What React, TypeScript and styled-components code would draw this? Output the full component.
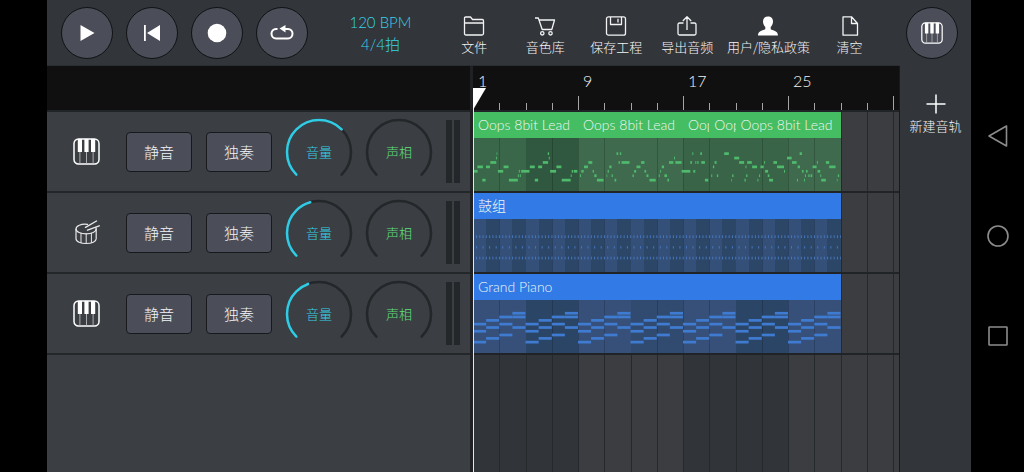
import React, { useState } from "react";
import styled, { createGlobalStyle } from "styled-components";

const LATIN = `Lato, "Noto Sans CJK SC", sans-serif`;
const CJK = `"Noto Sans CJK SC", sans-serif`;

const GlobalStyle = createGlobalStyle`
  *, *::before, *::after { box-sizing: border-box; }
  body { margin: 0; background: #000; font-family: ${CJK}; font-weight: 300; color: #f2f3f5; }
  button { font: inherit; color: inherit; cursor: pointer; padding: 0; margin: 0; border: 0; background: none; }
  svg { display: block; }
`;

/* ---------- page frame ---------- */

const Screen = styled.div`
  display: flex;
  min-height: 100vh;
  padding-left: 47px;
  background: #000;
`;

const Main = styled.main`
  flex: 1;
  min-width: 0;
  display: flex;
  flex-direction: column;
`;

const Sidebar = styled.aside`
  flex: 0 0 71px;
  display: flex;
  flex-direction: column;
  background: #323539;
`;

const SidebarTop = styled.div`
  height: 66px;
  padding: 7px 6px;
`;

const NewTrackButton = styled.button`
  display: flex;
  flex-direction: column;
  align-items: center;
  gap: 2px;
  margin-top: 28px;
  font-size: 13px;
  line-height: 20px;
  white-space: nowrap;
`;

const SystemNav = styled.nav`
  flex: 0 0 53px;
  display: flex;
  flex-direction: column;
  align-items: center;
  justify-content: center;
  gap: 76px;
`;

/* ---------- toolbar ---------- */

const Toolbar = styled.header`
  display: flex;
  align-items: center;
  height: 66px;
  padding: 0 15px 0 14px;
  background: #323539;
  border-bottom: 1px solid #2a2d31;
`;

const Transport = styled.div`
  display: flex;
  gap: 13px;
`;

const RoundButton = styled.button`
  display: grid;
  place-items: center;
  width: 52px;
  height: 52px;
  border-radius: 50%;
  border: 1px solid #111215;
  background: #4b4d58;
`;

const Tempo = styled.button`
  flex: 1;
  margin-left: 14px;
  font-family: ${LATIN};
  font-size: 15px;
  line-height: 22px;
  font-weight: 300;
  color: #38d2ea;
  span { display: block; }
`;

const Menu = styled.div`
  display: flex;
`;

const MenuButton = styled.button`
  display: flex;
  flex-direction: column;
  align-items: center;
  min-width: 71px;
  padding: 6px 4px 0;
  font-size: 13px;
  line-height: 20px;
  white-space: nowrap;
`;

/* ---------- track panel ---------- */

const Workspace = styled.div`
  flex: 1;
  display: flex;
`;

const TrackPanel = styled.section`
  display: flex;
  flex-direction: column;
  background: #3b3e42;
  border-right: 3px solid #1f2124;
  box-sizing: content-box;
`;

const PanelHead = styled.div`
  height: 46px;
  background: #101010;
  border-bottom: 2px solid #202427;
`;

const TrackRow = styled.div`
  display: flex;
  align-items: center;
  gap: 14px;
  height: 81px;
  padding: 0 10px 0 26px;
  border-bottom: 2px solid #23272a;
`;

const TrackIcon = styled.div`
  width: 39px;
`;

const PadButton = styled.button`
  width: 66px;
  height: 40px;
  border: 1px solid #17191c;
  border-radius: 4px;
  background: #4b4d58;
  font-size: 15px;
  line-height: 22px;
`;

const DialBox = styled.label<{ $color: string }>`
  position: relative;
  display: grid;
  width: 66px;
  height: 66px;
  place-items: center;
  color: ${(p) => p.$color};
  font-size: 13px;
  line-height: 20px;
  & > * { grid-area: 1 / 1; }
  input { position: absolute; inset: 0; width: 100%; margin: 0; opacity: 0; cursor: pointer; }
`;

const Meter = styled.div`
  display: flex;
  gap: 2px;
  width: 14px;
  height: 63px;
  &::before, &::after { content: ""; flex: 1; background: #24272a; }
`;

/* ---------- timeline ---------- */

const Timeline = styled.section`
  flex: 1;
  min-width: 0;
  position: relative;
  display: flex;
  flex-direction: column;
  border-right: 1px solid #17191c;
`;

const barGrid = `
  display: grid;
  grid-template-columns: repeat(16, minmax(0, 1fr)) 6px;
`;

const Ruler = styled.div`
  ${barGrid}
  height: 46px;
  background: #101010;
  border-bottom: 2px solid #202427;
`;

const RulerBar = styled.div<{ $major: boolean }>`
  display: flex;
  flex-direction: column;
  padding-top: 5px;
  font-family: ${LATIN};
  font-size: 16px;
  line-height: 20px;
  font-weight: 300;
  &::after {
    content: "";
    margin-top: auto;
    width: 1px;
    height: ${(p) => (p.$major ? 14 : 7)}px;
    background: #a5a5a5;
  }
`;

const RulerLabel = styled.span`
  padding-left: 5px;
`;

const Lane = styled.div`
  ${barGrid}
  grid-template-rows: 26px 53px;
  height: 81px;
  border-bottom: 2px solid #202427;
`;

const EmptyLane = styled.div`
  ${barGrid}
  flex: 1;
`;

const BarCell = styled.div<{ $bar: number; $dark: boolean }>`
  grid-column: ${(p) => p.$bar + 1};
  grid-row: 1 / -1;
  border-left: 1px solid #25292c;
  background: ${(p) => (p.$dark ? "#313438" : "#3b3d41")};
`;

const ClipTitle = styled.div<{ $from: number; $to: number; $color: string }>`
  grid-column: ${(p) => p.$from + 1} / ${(p) => p.$to + 1};
  grid-row: 1;
  overflow: hidden;
  padding-left: 5px;
  background: ${(p) => p.$color};
  color: #eef6f2;
  font-family: ${LATIN};
  font-size: 14px;
  line-height: 26px;
  white-space: nowrap;
`;

const ClipBody = styled.svg`
  grid-column: 1 / 15;
  grid-row: 2;
  width: 100%;
  height: 53px;
`;

const Playhead = styled.div`
  position: absolute;
  left: 0;
  top: 22px;
  bottom: 0;
  width: 1px;
  background: #e4e6e6;
`;

/* ---------- icons ---------- */

const PianoIcon = ({ size }: { size: number }) => (
  <svg width={size} height={size} viewBox="0 0 27 27" fill="none">
    <rect x="1" y="1" width="25" height="25" rx="4.5" stroke="#fff" strokeWidth="1.5" />
    <path d="M6.9 13V25.5M13.5 13V25.5M20.1 13V25.5" stroke="#b9babd" strokeWidth="0.9" />
    <path d="M4.8 1h4.2v13h-4.2zM11.4 1h4.2v13h-4.2zM18 1h4.2v13h-4.2z" fill="#fff" />
  </svg>
);

const DrumIcon = () => (
  <svg width="27" height="27" viewBox="0 0 27 27" fill="none" stroke="#e8e8ea" strokeWidth="1.2" strokeLinecap="round">
    <path d="M14.500 5.400C8 4.600 3 6.800 3 10c0 2.800 4.600 4.800 10.200 4.800s10-2 10-4.800c0-.5-.1-1-.4-1.400" />
    <path d="M3 10v9.800c0 2.800 4.600 4.700 10.200 4.700s10-1.900 10-4.700V10" />
    <path d="M8 14.200v9.500M13.200 14.800v9.700M18.400 14.200v9.500" strokeWidth="1" />
    <path d="M12.500 8.300L23.500 2M14.500 11.200L26.200 6.800" strokeWidth="1.400" />
  </svg>
);

const PlayIcon = () => (
  <svg width="20" height="20" viewBox="0 0 20 20" fill="#fff">
    <path d="M3.500 2v16L17.500 10z" />
  </svg>
);

const RewindIcon = () => (
  <svg width="20" height="20" viewBox="0 0 20 20" fill="#fff">
    <path d="M2 2h1.800v16H2zM18 2v16L5 10z" />
  </svg>
);

const RecordIcon = () => (
  <svg width="20" height="20" viewBox="0 0 20 20" fill="#fff">
    <circle cx="10" cy="10" r="9.300" />
  </svg>
);

const LoopIcon = () => (
  <svg width="24" height="18" viewBox="0 0 24 18" fill="none" stroke="#fff" strokeWidth="2">
    <path d="M7.500 5H6a4.500 4.500 0 0 0-4.500 4.800A4.700 4.700 0 0 0 6 14.500h12A4.700 4.700 0 0 0 22.500 9.800 4.500 4.500 0 0 0 18 5h-4" />
    <path d="M9.500 4.600L15.500 1v7.500z" fill="#fff" stroke="none" />
  </svg>
);

const Outline = ({ children }: { children: React.ReactNode }) => (
  <svg width="22" height="22" viewBox="0 0 22 22" fill="none" stroke="#f2f3f5" strokeWidth="1.300" strokeLinejoin="round">
    {children}
  </svg>
);

const FolderIcon = () => (
  <Outline>
    <path d="M1.500 18.500V3.200Q1.500 2 2.700 2H7.500L9.500 4.500H19.300Q20.500 4.500 20.500 5.700V18.500Q20.500 20 19 20H3Q1.500 20 1.500 18.500ZM1.500 8H20.500" />
  </Outline>
);

const CartIcon = () => (
  <Outline>
    <path d="M1 3h3.300l3.900 11.500h9.600L20.500 5H5" />
    <circle cx="8.300" cy="18.300" r="1.700" />
    <circle cx="16.500" cy="18.300" r="1.700" />
  </Outline>
);

const SaveIcon = () => (
  <Outline>
    <rect x="1.500" y="1.800" width="19" height="18.400" rx="2" />
    <path d="M5.500 2v7.500h11V2M13 3.800v3.700" />
  </Outline>
);

const ExportIcon = () => (
  <Outline>
    <path d="M7.500 8H3.500Q2 8 2 9.500V18.500Q2 20 3.500 20H18.500Q20 20 20 18.500V9.500Q20 8 18.500 8H14.500M11 15V2M6.800 6L11 1.800L15.200 6" />
  </Outline>
);

const UserIcon = () => (
  <svg width="22" height="22" viewBox="0 0 22 22" fill="#fff">
    <path d="M11 1.500c-3.200 0-5.200 2.200-5 5.300.1 2.300 1.100 4 2.300 5.100v2.300C6.500 15.300 1 15.500 1 20.500h20c0-5-5.500-5.200-7.300-6.300v-2.300c1.200-1.100 2.200-2.800 2.300-5.100.2-3.100-1.800-5.300-5-5.300z" />
  </svg>
);

const PageIcon = () => (
  <Outline>
    <path d="M4 1.800H12.500L18.500 8.500V20.200H4ZM12.500 1.800V8.500H18.500" />
  </Outline>
);

const PlusIcon = () => (
  <svg width="20" height="20" viewBox="0 0 20 20" stroke="#fff" strokeWidth="1.500">
    <path d="M10 0.500V19.500M0.500 10H19.500" />
  </svg>
);

const NavIcon = ({ children }: { children: React.ReactNode }) => (
  <svg width="24" height="24" viewBox="0 0 24 24" fill="none" stroke="#8c8c8c" strokeWidth="1.600" strokeLinejoin="round">
    {children}
  </svg>
);

/* ---------- dial ---------- */

const DIAL_ARC = "M10.370 55.630A32 32 0 1 1 55.630 55.630";

function Dial({ label, color, start, filled }: { label: string; color: string; start: number; filled: boolean }) {
  const [value, setValue] = useState(start);
  return (
    <DialBox $color={color}>
      <svg width="66" height="66" viewBox="0 0 66 66" fill="none" strokeWidth="2.600" strokeLinecap="round" overflow="visible">
        <path d={DIAL_ARC} stroke="#24272a" />
        {filled && <path d={DIAL_ARC} pathLength={270} strokeDasharray={`${value} 400`} stroke="#31cbe4" />}
      </svg>
      <span>{label}</span>
      <input type="range" min={0} max={270} value={value} onChange={(e) => setValue(Number(e.target.value))} />
    </DialBox>
  );
}

/* ---------- clip contents: one bar is 79 units wide, the body 156 high ---------- */

const BAR = 79;
const BARS = 14;

type Note = [x: number, width: number, row: number];

const LEAD: Note[] = [
  [2, 12, 4], [13, 17, 3], [28, 10, 6], [39, 12, 3], [52, 18, 2], [69, 3, 1], [71, 2, 0],
  [75, 16, 4], [92, 15, 3], [108, 27, 6], [135, 3, 5], [138, 3, 4], [141, 3, 5],
  [145, 25, 4], [171, 15, 3], [186, 10, 6], [196, 12, 3], [210, 16, 2], [225, 4, 0], [228, 3, 1],
  [232, 18, 4], [251, 15, 3], [267, 27, 6], [294, 3, 5], [297, 4, 4], [303, 11, 4],
  [322, 3, 5], [326, 7, 4], [334, 12, 3], [347, 12, 2], [360, 4, 4], [365, 7, 5], [373, 20, 6],
  [402, 2, 5], [405, 4, 4], [410, 7, 3], [417, 4, 5], [426, 5, 6], [432, 5, 0], [442, 4, 0], [438, 4, 2], [447, 24, 2],
  [480, 4, 5], [485, 6, 4], [492, 12, 3], [506, 10, 2], [516, 5, 4], [522, 6, 5], [531, 19, 6],
  [559, 3, 5], [563, 3, 4], [568, 7, 3], [576, 8, 5], [585, 5, 6], [590, 13, 2], [605, 3, 1], [609, 19, 2],
  [628, 26, 4], [654, 5, 2], [660, 3, 0], [663, 6, 4], [669, 3, 2], [675, 4, 2], [684, 5, 0], [687, 11, 2], [698, 10, 6],
  [717, 3, 5], [722, 4, 3], [727, 6, 2], [734, 4, 5], [756, 14, 0], [777, 2, 6], [780, 4, 5], [786, 15, 1],
  [801, 15, 2], [817, 4, 6], [820, 3, 3], [822, 4, 5], [825, 14, 2], [840, 15, 3], [856, 3, 6], [861, 3, 5],
  [865, 10, 3], [876, 3, 2], [879, 9, 4], [887, 5, 5], [891, 12, 6], [904, 11, 2], [915, 21, 3], [936, 3, 4],
  [945, 14, 1], [960, 14, 2], [975, 3, 6], [977, 7, 3], [983, 7, 0], [990, 5, 4], [996, 3, 6], [999, 3, 5],
  [1002, 5, 4], [1009, 4, 5], [1016, 5, 5], [1022, 12, 3], [1035, 3, 2], [1037, 8, 4], [1045, 3, 5],
  [1048, 14, 6], [1062, 10, 2], [1072, 19, 3], [1095, 2, 6], [1098, 4, 5],
];

const CHORDS = [[3, 5, 8], [2, 4, 7], [1, 3, 6], [0, 1, 4]];

type Band = [from: number, to: number, color: string];

const LEAD_BANDS: Band[] = [
  [0, 2, "#3a6649"], [2, 4, "#30573f"], [4, 8, "#3f6a4e"], [8, 12, "#396447"], [12, 14, "#3f6a4e"],
];

const PIANO_BANDS: Band[] = Array.from({ length: 7 }, (_, i) => [
  i * 2, i * 2 + 2, i % 2 ? (i === 3 ? "#304b6f" : "#2a4566") : "#36507a",
]);

const DRUM_BANDS: Band[] = Array.from({ length: BARS * 2 }, (_, i) => [
  i / 2, i / 2 + 0.5, i % 2 ? "#2c4667" : "#344f78",
]);

function Body({ bands, children }: { bands: Band[]; children: React.ReactNode }) {
  return (
    <ClipBody viewBox={`0 0 ${BAR * BARS} 156`} preserveAspectRatio="none" shapeRendering="crispEdges">
      {bands.map(([from, to, color]) => (
        <rect key={from} x={from * BAR} y="0" width={(to - from) * BAR} height="156" fill={color} />
      ))}
      {Array.from({ length: BARS }, (_, i) => (
        <rect key={i} x={i * BAR} y="0" width="3" height="156" fill="#000" opacity="0.18" />
      ))}
      {children}
    </ClipBody>
  );
}

const LeadBody = () => (
  <Body bands={LEAD_BANDS}>
    <g fill="#4fb96c" shapeRendering="geometricPrecision">
      {LEAD.map(([x, w, row], i) => (
        <rect key={i} x={x} y={42 + row * 13} width={w} height="8" />
      ))}
    </g>
  </Body>
);

const DrumBody = () => (
  <Body bands={DRUM_BANDS}>
    <g fill="#4677bd" shapeRendering="geometricPrecision">
      {Array.from({ length: BARS * 8 }, (_, i) => {
        const x = 9 + (i * BAR) / 8;
        return (
          <React.Fragment key={i}>
            <rect x={x} y="48" width="3" height="8" />
            {i % 2 === 0 && <rect x={x} y="80" width="3" height="7" />}
            <rect x={x} y="111" width="3" height="8" />
          </React.Fragment>
        );
      })}
    </g>
  </Body>
);

const PianoBody = () => (
  <Body bands={PIANO_BANDS}>
    <g fill="#3f7bd0" shapeRendering="geometricPrecision">
      {Array.from({ length: BARS * 2 }, (_, i) =>
        CHORDS[i % 4].map((row) => (
          <rect key={`${i}-${row}`} x={(i * BAR) / 2} y={35 + Math.round(row * 10.6)} width={BAR / 2} height="8" />
        ))
      )}
    </g>
  </Body>
);

/* ---------- data ---------- */

const GREEN = "#45bd62";
const BLUE = "#327ae6";

const TRACKS = [
  {
    id: "lead", icon: <PianoIcon size={27} />, volume: 180, color: GREEN, body: <LeadBody />,
    clips: [
      { title: "Oops 8bit Lead", from: 0, to: 4 },
      { title: "Oops 8bit Lead", from: 4, to: 8 },
      { title: "Oop", from: 8, to: 9 },
      { title: "Oop", from: 9, to: 10 },
      { title: "Oops 8bit Lead", from: 10, to: 14 },
    ],
  },
  {
    id: "drums", icon: <DrumIcon />, volume: 119, color: BLUE, body: <DrumBody />,
    clips: [{ title: "鼓组", from: 0, to: 14 }],
  },
  {
    id: "piano", icon: <PianoIcon size={27} />, volume: 115, color: BLUE, body: <PianoBody />,
    clips: [{ title: "Grand Piano", from: 0, to: 14 }],
  },
];

const MENU = [
  { label: "文件", icon: <FolderIcon /> },
  { label: "音色库", icon: <CartIcon /> },
  { label: "保存工程", icon: <SaveIcon /> },
  { label: "导出音频", icon: <ExportIcon /> },
  { label: "用户/隐私政策", icon: <UserIcon /> },
  { label: "清空", icon: <PageIcon /> },
];

const Bars = ({ shaded }: { shaded?: boolean }) => (
  <>
    {Array.from({ length: 17 }, (_, i) => (
      <BarCell key={i} $bar={i} $dark={!!shaded && i < 12 && Math.floor(i / 4) % 2 === 0} />
    ))}
  </>
);

export default function App() {
  return (
    <>
      <GlobalStyle />
      <Screen>
        <Main>
          <Toolbar>
            <Transport>
              <RoundButton aria-label="播放"><PlayIcon /></RoundButton>
              <RoundButton aria-label="回到开头"><RewindIcon /></RoundButton>
              <RoundButton aria-label="录音"><RecordIcon /></RoundButton>
              <RoundButton aria-label="循环"><LoopIcon /></RoundButton>
            </Transport>
            <Tempo>
              <span>120 BPM</span>
              <span>4/4拍</span>
            </Tempo>
            <Menu>
              {MENU.map((item) => (
                <MenuButton key={item.label}>
                  {item.icon}
                  {item.label}
                </MenuButton>
              ))}
            </Menu>
          </Toolbar>
          <Workspace>
            <TrackPanel>
              <PanelHead />
              {TRACKS.map((track) => (
                <TrackRow key={track.id}>
                  <TrackIcon>{track.icon}</TrackIcon>
                  <PadButton>静音</PadButton>
                  <PadButton>独奏</PadButton>
                  <Dial label="音量" color="#36d0e8" start={track.volume} filled />
                  <Dial label="声相" color="#5fe07f" start={135} filled={false} />
                  <Meter />
                </TrackRow>
              ))}
            </TrackPanel>
            <Timeline>
              <Ruler>
                {Array.from({ length: 17 }, (_, i) => (
                  <RulerBar key={i} $major={i % 4 === 0}>
                    {i % 4 === 0 && i < 16 && <RulerLabel>{i * 2 + 1}</RulerLabel>}
                  </RulerBar>
                ))}
              </Ruler>
              {TRACKS.map((track) => (
                <Lane key={track.id}>
                  <Bars />
                  {track.clips.map((clip) => (
                    <ClipTitle key={clip.from} $from={clip.from} $to={clip.to} $color={track.color}>
                      {clip.title}
                    </ClipTitle>
                  ))}
                  {track.body}
                </Lane>
              ))}
              <EmptyLane>
                <Bars shaded />
              </EmptyLane>
              <Playhead>
                <svg width="13" height="22" viewBox="0 0 13 22">
                  <path d="M0 0H13L0 22Z" fill="#fff" />
                </svg>
              </Playhead>
            </Timeline>
          </Workspace>
        </Main>
        <Sidebar>
          <SidebarTop>
            <RoundButton aria-label="键盘"><PianoIcon size={22} /></RoundButton>
          </SidebarTop>
          <NewTrackButton>
            <PlusIcon />
            新建音轨
          </NewTrackButton>
        </Sidebar>
        <SystemNav>
          <button aria-label="返回">
            <NavIcon><path d="M20.500 2V22L3 12Z" /></NavIcon>
          </button>
          <button aria-label="主页">
            <NavIcon><circle cx="12" cy="12" r="10" /></NavIcon>
          </button>
          <button aria-label="最近任务">
            <NavIcon><rect x="3" y="3" width="18" height="18" rx="0.500" /></NavIcon>
          </button>
        </SystemNav>
      </Screen>
    </>
  );
}
